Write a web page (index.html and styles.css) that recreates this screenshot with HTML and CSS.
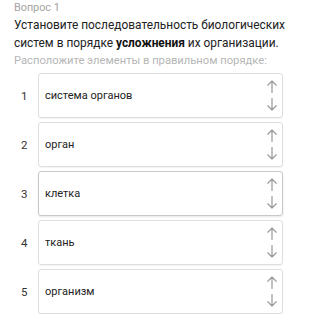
FILE: index.html
```html
<!DOCTYPE html>
<html lang="ru">
<head>
<meta charset="utf-8">
<link rel="stylesheet" href="styles.css">
</head>
<body>
<div class="page">
  <div class="qnum">Вопрос 1</div>
  <div class="qtext">Установите последовательность биологических систем в порядке <b>усложнения</b> их организации.</div>
  <div class="hint">Расположите элементы в правильном порядке:</div>
  <div class="list">
    <div class="row"><div class="num">1</div><div class="box"><span class="label">система органов</span><span class="arrows"><svg viewBox="0 0 10 13" class="arr"><path d="M5 12.5V1M0.8 5.2L5 1L9.2 5.2"/></svg><svg viewBox="0 0 10 13" class="arr"><path d="M5 0.5V12M0.8 7.8L5 12L9.2 7.8"/></svg></span></div></div>
    <div class="row"><div class="num">2</div><div class="box"><span class="label">орган</span><span class="arrows"><svg viewBox="0 0 10 13" class="arr"><path d="M5 12.5V1M0.8 5.2L5 1L9.2 5.2"/></svg><svg viewBox="0 0 10 13" class="arr"><path d="M5 0.5V12M0.8 7.8L5 12L9.2 7.8"/></svg></span></div></div>
    <div class="row"><div class="num">3</div><div class="box active"><span class="label">клетка</span><span class="arrows"><svg viewBox="0 0 10 13" class="arr"><path d="M5 12.5V1M0.8 5.2L5 1L9.2 5.2"/></svg><svg viewBox="0 0 10 13" class="arr"><path d="M5 0.5V12M0.8 7.8L5 12L9.2 7.8"/></svg></span></div></div>
    <div class="row"><div class="num">4</div><div class="box"><span class="label">ткань</span><span class="arrows"><svg viewBox="0 0 10 13" class="arr"><path d="M5 12.5V1M0.8 5.2L5 1L9.2 5.2"/></svg><svg viewBox="0 0 10 13" class="arr"><path d="M5 0.5V12M0.8 7.8L5 12L9.2 7.8"/></svg></span></div></div>
    <div class="row"><div class="num">5</div><div class="box"><span class="label">организм</span><span class="arrows"><svg viewBox="0 0 10 13" class="arr"><path d="M5 12.5V1M0.8 5.2L5 1L9.2 5.2"/></svg><svg viewBox="0 0 10 13" class="arr"><path d="M5 0.5V12M0.8 7.8L5 12L9.2 7.8"/></svg></span></div></div>
  </div>
</div>
</body>
</html>
```
FILE: styles.css
```css
html, body {
  margin: 0;
  padding: 0;
  background: #fff;
}
.page {
  font-family: Roboto, "Noto Sans", sans-serif;
  padding: 0 14px;
}
.qnum {
  font-size: 10.8px;
  line-height: 16px;
  color: #a3a3a3;
}
.qtext {
  margin-top: 1px;
  font-size: 11.9px;
  line-height: 17.5px;
  color: #222;
}
.qtext b {
  font-weight: 700;
  color: #111;
}
.hint {
  margin-top: 1px;
  font-size: 11.2px;
  line-height: 16px;
  color: #b6b6b6;
}
.list {
  margin-top: 4px;
  display: flex;
  flex-direction: column;
  gap: 4px;
}
.row {
  display: flex;
  align-items: center;
}
.num {
  width: 24px;
  padding-left: 7px;
  box-sizing: border-box;
  font-size: 11.5px;
  color: #333;
}
.box {
  width: 245px;
  height: 45px;
  box-sizing: border-box;
  border: 1px solid #dedede;
  border-radius: 3px;
  box-shadow: 0 1px 1px rgba(0,0,0,0.05);
  display: flex;
  align-items: center;
  justify-content: space-between;
  padding: 0 5px 0 6px;
}
.box.active {
  border-color: #c8c8c8;
  box-shadow: 0 1px 2px rgba(0,0,0,0.1);
}
.label {
  font-size: 11px;
  color: #222;
}
.arrows {
  display: flex;
  flex-direction: column;
  gap: 5px;
  align-items: center;
}
.arr {
  width: 10px;
  height: 13px;
  fill: none;
  stroke: #9c9c9c;
  stroke-width: 1.25;
  stroke-linecap: round;
  stroke-linejoin: round;
}
```
